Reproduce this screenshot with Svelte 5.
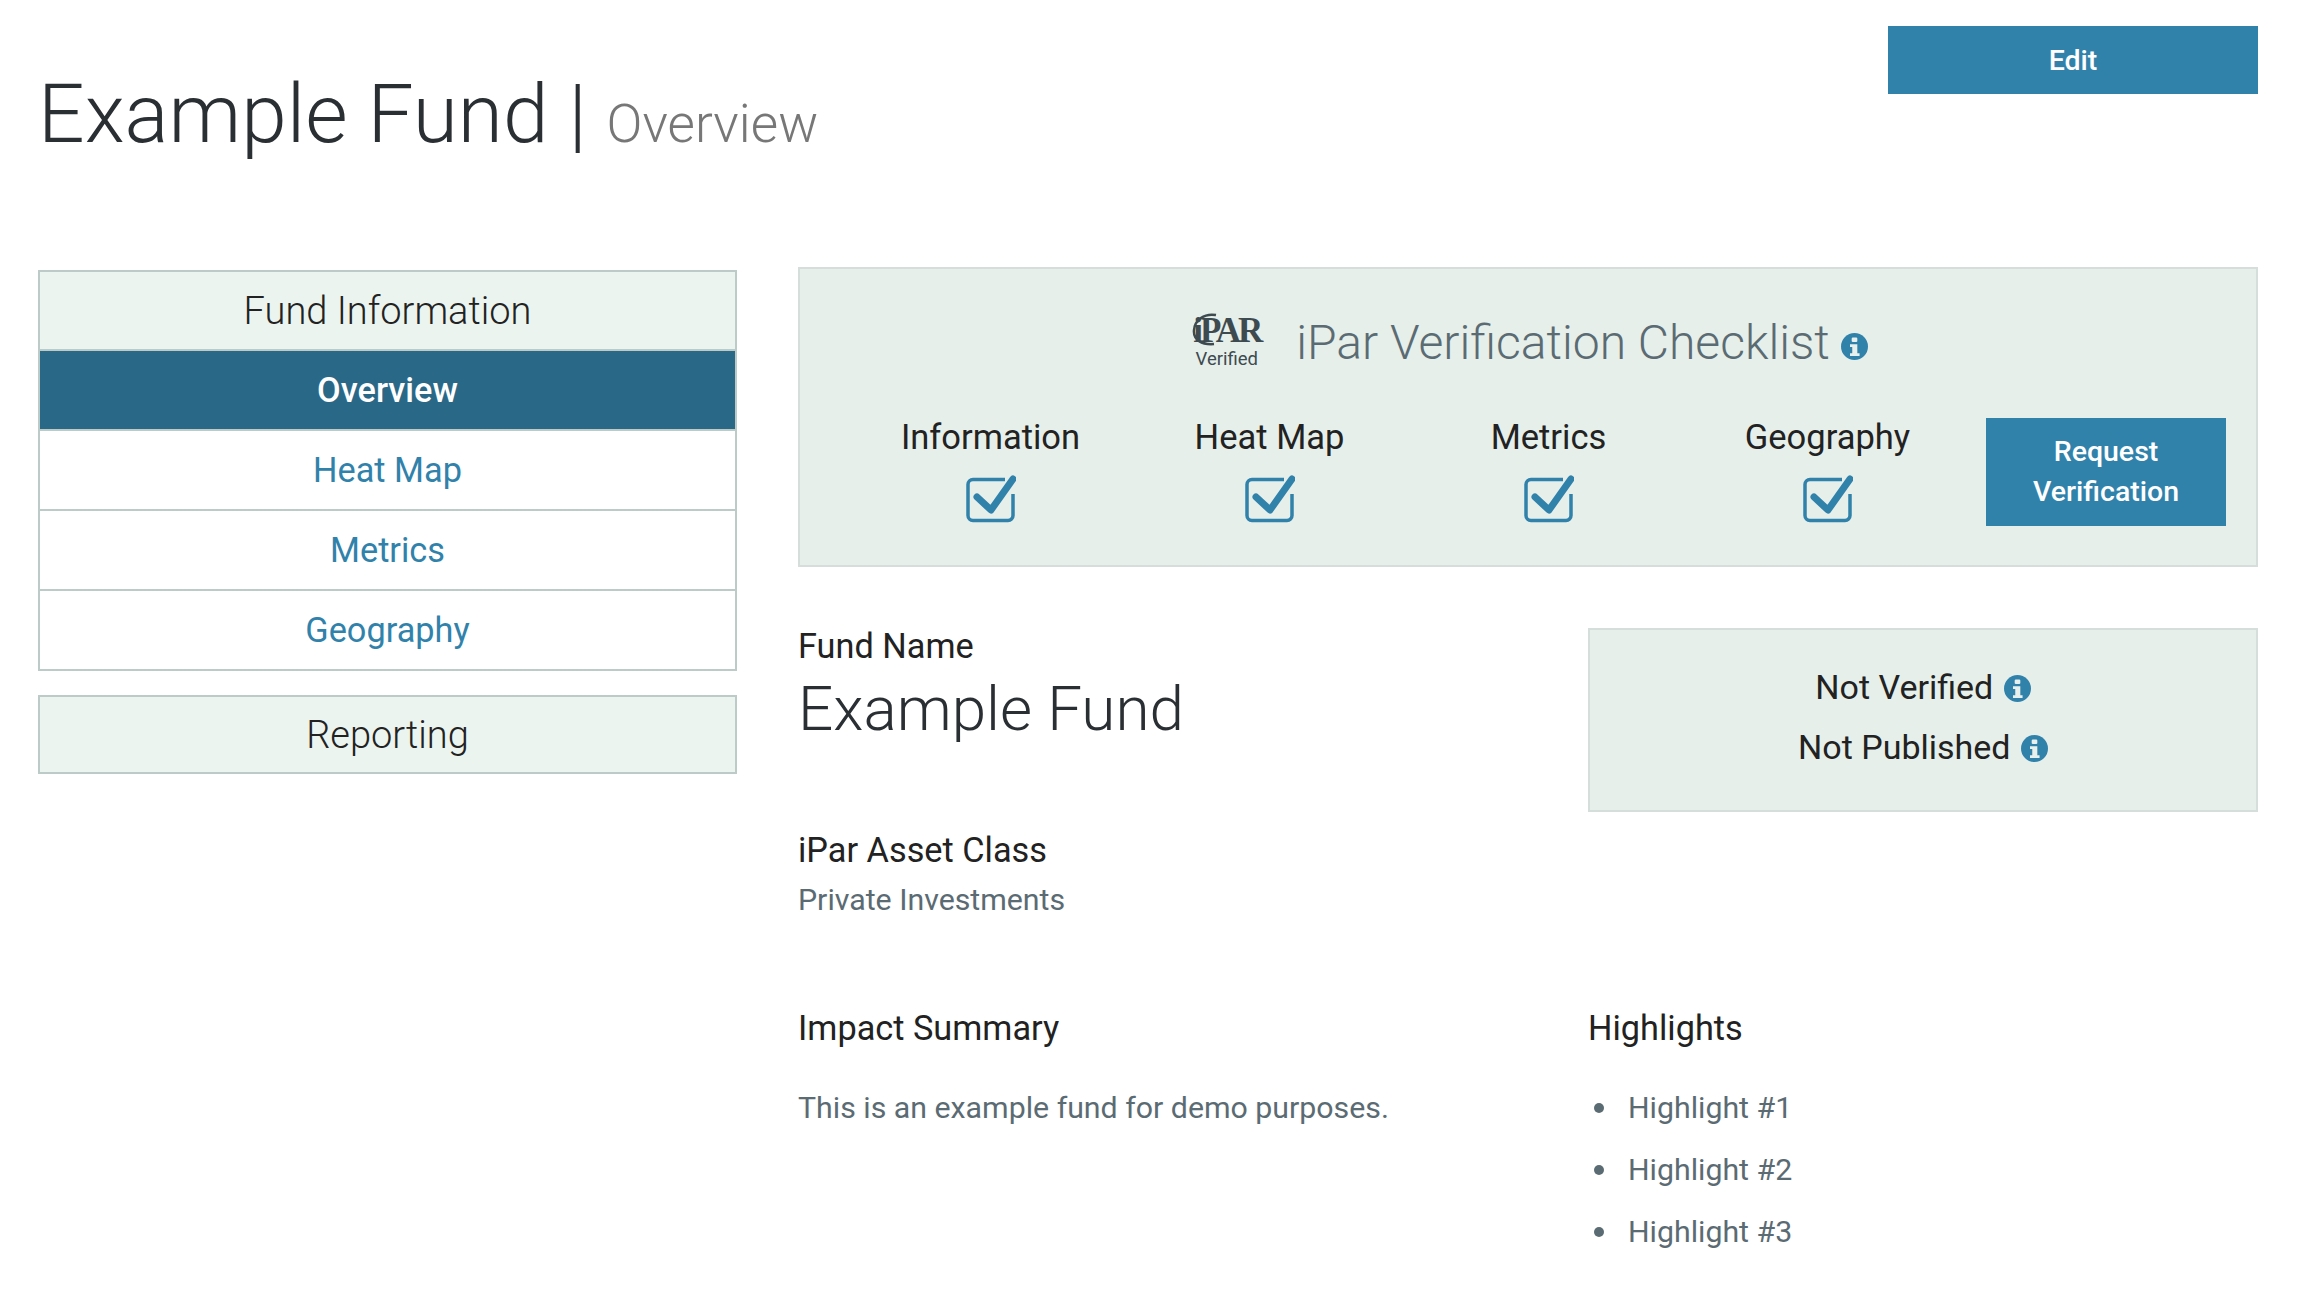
<script>
	const checks = ['Information', 'Heat Map', 'Metrics', 'Geography'];
	const nav = ['Heat Map', 'Metrics', 'Geography'];
	const highlights = ['Highlight #1', 'Highlight #2', 'Highlight #3'];
</script>

{#snippet info(size)}
	<svg class="info" width={size} height={size} viewBox="0 0 24 24" aria-hidden="true">
		<circle cx="12" cy="12" r="12" fill="#3182ab" />
		<rect x="9.5" y="4" width="5" height="4" rx="1" fill="#e7f0ec" />
		<path d="M8 10h6.500v8H16.500v2.500H8V18h2v-5.500H8z" fill="#e7f0ec" />
	</svg>
{/snippet}

{#snippet check()}
	<svg class="check" width="50" height="48" viewBox="0 0 50 48" aria-hidden="true">
		<path d="M39 4.500H7a5 5 0 0 0-5 5v31a5 5 0 0 0 5 5h35a5 5 0 0 0 5-5V19" fill="none" stroke="#3182ab" stroke-width="3.500" />
		<path d="M11 22l14 13L47 4" fill="none" stroke="#3182ab" stroke-width="7" stroke-linecap="round" stroke-linejoin="round" />
	</svg>
{/snippet}

<div class="page">
	<header class="top">
		<h1>Example Fund <span class="bar">|</span> <small>Overview</small></h1>
		<button class="btn edit" type="button">Edit</button>
	</header>

	<div class="columns">
		<aside class="side">
			<nav class="menu">
				<div class="menu-head">Fund Information</div>
				<div class="menu-item active">Overview</div>
				{#each nav as item}
					<div class="menu-item">{item}</div>
				{/each}
			</nav>
			<div class="menu">
				<div class="menu-head last">Reporting</div>
			</div>
		</aside>

		<main class="main">
			<section class="checklist">
				<div class="check-title">
					<div class="logo">
						<span class="logo-mark">iPAR
							<svg class="logo-ring" width="36" height="34" viewBox="0 0 36 34" aria-hidden="true">
								<path d="M26 2C14 0 5 7 4 17s8 15 20 14" fill="none" stroke="#3d4a50" stroke-width="2.500" />
							</svg>
						</span>
						<span class="logo-sub">Verified</span>
					</div>
					<h2>iPar Verification Checklist</h2>
					{@render info(27)}
				</div>
				<div class="check-row">
					{#each checks as label}
						<div class="check-cell">
							<span>{label}</span>
							{@render check()}
						</div>
					{/each}
					<button class="btn request" type="button">Request<br />Verification</button>
				</div>
			</section>

			<div class="grid first">
				<div>
					<div class="label">Fund Name</div>
					<div class="fund-name">Example Fund</div>
				</div>
				<div class="status">
					<div>Not Verified {@render info(27)}</div>
					<div>Not Published {@render info(27)}</div>
				</div>
			</div>

			<div class="asset">
				<div class="label">iPar Asset Class</div>
				<div class="value">Private Investments</div>
			</div>

			<div class="grid summary">
				<div>
					<div class="label">Impact Summary</div>
					<p class="value">This is an example fund for demo purposes.</p>
				</div>
				<div>
					<div class="label">Highlights</div>
					<ul>
						{#each highlights as item}
							<li>{item}</li>
						{/each}
					</ul>
				</div>
			</div>
		</main>
	</div>
</div>

<style>
	:global(body) {
		margin: 0;
		background: #fff;
		font-family: Roboto, 'Liberation Sans', sans-serif;
		color: #222;
	}

	.page {
		padding: 26px 50px 0 38px;
		box-sizing: border-box;
		width: 2308px;
		height: 1314px;
		overflow: hidden;
	}

	.top {
		display: flex;
		justify-content: space-between;
		align-items: flex-start;
		height: 241px;
	}

	h1 {
		margin: 47px 0 0;
		font-size: 82px;
		line-height: 1;
		font-weight: 300;
		color: #2a2f33;
	}

	h1 small {
		font-size: 53px;
		color: #777;
	}

	.btn {
		background: #3182ab;
		color: #fff;
		border: none;
		font-family: inherit;
		font-weight: 500;
		font-size: 28.500px;
	}

	.edit {
		width: 370px;
		height: 68px;
	}

	.columns {
		display: grid;
		grid-template-columns: 699px 1460px;
		gap: 61px;
	}

	.side {
		display: flex;
		flex-direction: column;
		gap: 24px;
		padding-top: 3px;
	}

	.menu {
		border: 2px solid #bccbc7;
		display: flex;
		flex-direction: column;
	}

	.menu-head {
		height: 77px;
		background: #ebf4ef;
		display: flex;
		align-items: center;
		justify-content: center;
		font-size: 38px;
		font-weight: 300;
		color: #222;
	}

	.menu-head.last {
		height: 75px;
	}

	.menu-item {
		height: 80px;
		box-sizing: border-box;
		border-top: 2px solid #bccbc7;
		display: flex;
		align-items: center;
		justify-content: center;
		font-size: 34.300px;
		color: #3182ab;
	}

	.menu-item.active {
		background: #2a6887;
		color: #fff;
		font-weight: 500;
	}

	.checklist {
		background: #e6efea;
		border: 2px solid #d5dedb;
		height: 300px;
		box-sizing: border-box;
		padding: 0 30px 0 51px;
	}

	.check-title {
		display: flex;
		align-items: center;
		justify-content: center;
		gap: 36px;
		height: 146px;
		margin: 0 0 2px -16px;
	}

	.check-title .info {
		margin-left: -25px;
		margin-top: 8px;
	}

	h2 {
		margin: 0;
		font-size: 48px;
		font-weight: 300;
		color: #5b6b73;
	}

	.logo {
		display: flex;
		flex-direction: column;
		align-items: center;
		color: #3d4a50;
	}

	.logo-mark {
		position: relative;
		font-family: 'Liberation Serif', serif;
		font-weight: 700;
		font-size: 35px;
		line-height: 34px;
		letter-spacing: -3px;
	}

	.logo-ring {
		position: absolute;
		left: -3px;
		top: -1px;
	}

	.logo-sub {
		font-size: 18.500px;
	}

	.check-row {
		display: flex;
		align-items: flex-start;
	}

	.check-cell {
		width: 279px;
		display: flex;
		flex-direction: column;
		align-items: center;
		font-size: 34.500px;
		color: #222;
		gap: 18px;
	}

	.request {
		width: 240px;
		height: 108px;
		line-height: 40px;
		flex: none;
		margin: 1px 0 0 19px;
	}

	.grid {
		display: grid;
		grid-template-columns: 1fr 670px;
		gap: 122px;
	}

	.grid.first {
		margin-top: 61px;
	}

	.label {
		font-size: 34.300px;
		line-height: 36px;
		color: #222;
	}

	.fund-name {
		font-size: 62px;
		font-weight: 300;
		line-height: 90px;
		color: #2a2f33;
	}

	.status {
		background: #e6efea;
		border: 2px solid #d5dedb;
		height: 184px;
		box-sizing: border-box;
		padding-bottom: 6px;
		display: flex;
		flex-direction: column;
		align-items: center;
		justify-content: center;
		gap: 24px;
		font-size: 34px;
		line-height: 36px;
		color: #222;
	}

	.status .info {
		vertical-align: -3px;
		margin-left: 2px;
	}

	.asset {
		margin-top: 20px;
	}

	.value {
		font-size: 30.300px;
		line-height: 40px;
		color: #5b6b73;
		margin: 12px 0 0;
	}

	.summary {
		margin-top: 90px;
	}

	.summary .value {
		margin-top: 42px;
	}

	ul {
		margin: 42px 0 0;
		padding: 0 0 0 6px;
		list-style: none;
		font-size: 30.300px;
		color: #5b6b73;
	}

	li {
		display: flex;
		align-items: center;
		gap: 24px;
		line-height: 40px;
		margin-bottom: 22px;
	}

	li::before {
		content: '';
		width: 10px;
		height: 10px;
		border-radius: 50%;
		background: #5b6b73;
	}
</style>
